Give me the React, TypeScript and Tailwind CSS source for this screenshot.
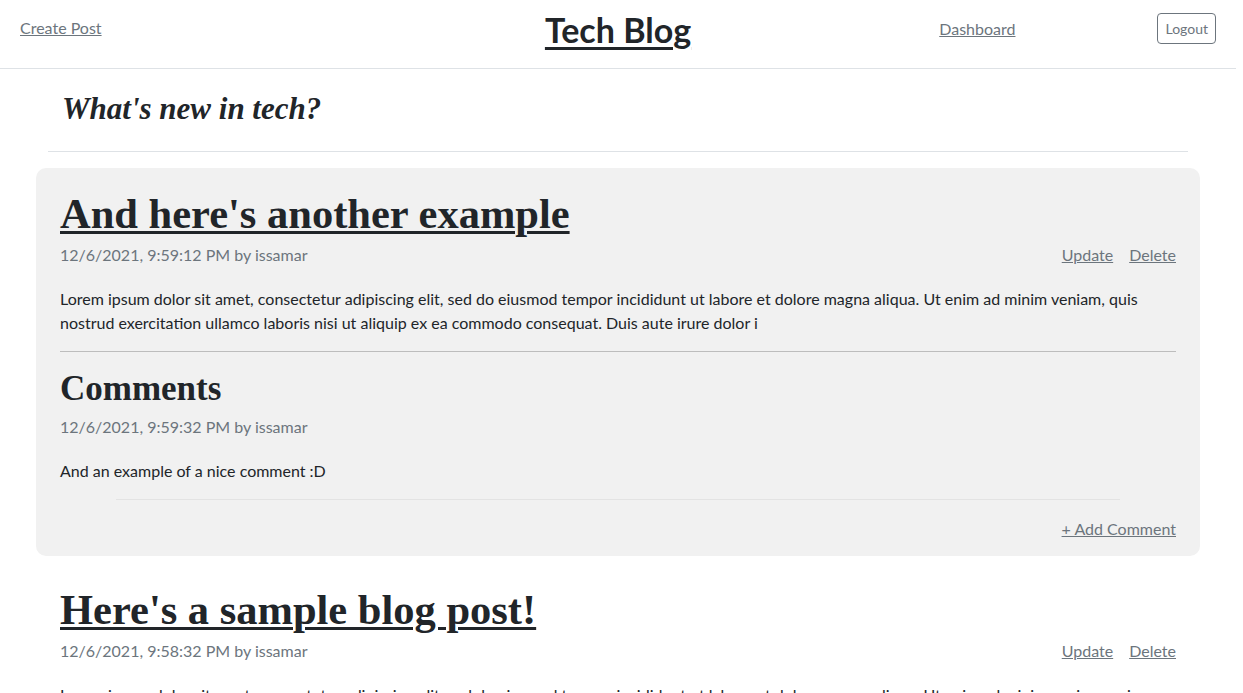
const LOREM =
  "Lorem ipsum dolor sit amet, consectetur adipiscing elit, sed do eiusmod tempor incididunt ut labore et dolore magna aliqua. Ut enim ad minim veniam, quis nostrud exercitation ullamco laboris nisi ut aliquip ex ea commodo consequat. Duis aute irure dolor i";

const serif = "font-['Liberation_Serif',serif]";

function PostMeta({ date }: { date: string }) {
  return (
    <div className="flex items-center justify-between leading-6">
      <span className="text-[#6c757d]">{date} by issamar</span>
      <div className="flex gap-4 text-[#6c757d]">
        <a href="#" className="underline">Update</a>
        <a href="#" className="underline">Delete</a>
      </div>
    </div>
  );
}

function PostTitle({ children }: { children: string }) {
  return (
    <h1 className={`${serif} mb-[5px] text-[42.5px] font-bold leading-[48px] text-[#212529]`}>
      <a href="#" className="underline decoration-[3px] underline-offset-[3px]">{children}</a>
    </h1>
  );
}

export default function App() {
  return (
    <div className="min-h-screen w-[1236px] bg-white font-['Lato','Noto_Sans',sans-serif] text-[16px] text-[#212529]">
      {/* Header */}
      <header className="grid h-[69px] grid-cols-[1fr_auto_1fr] items-start border-b border-[#dee2e6] px-5">
        <a href="#" className="mt-4 justify-self-start leading-6 text-[#6c757d] underline">Create Post</a>
        <a href="#" className="mt-[13px] text-[34px] font-bold leading-[34px] text-[#212529] underline decoration-[3px] underline-offset-[4px]">
          Tech Blog
        </a>
        <div className="mt-[13px] flex items-center justify-end gap-[142px]">
          <a href="#" className="leading-6 text-[#6c757d] underline">Dashboard</a>
          <button className="h-[31px] rounded border border-[#6c757d] px-[7px] text-[14px] text-[#6c757d]">
            Logout
          </button>
        </div>
      </header>

      <main className="px-9">
        <div className="mx-3 border-b border-[#dee2e6] pb-[25px] pt-[23px]">
          <h3 className={`${serif} pl-[14px] text-[31px] font-bold italic leading-[34px]`}>What's new in tech?</h3>
        </div>

        {/* Post with comments */}
        <section className="mt-4 rounded-[10px] bg-[#f1f1f1] px-6 pb-[15px] pt-[22px]">
          <PostTitle>And here's another example</PostTitle>
          <PostMeta date="12/6/2021, 9:59:12 PM" />
          <p className="mt-5 leading-6">{LOREM}</p>
          <hr className="my-4 border-t border-[#bdbdbd]" />
          <h2 className={`${serif} pt-[2px] text-[35px] font-bold leading-[38px]`}>Comments</h2>
          <div className="mt-[7px] leading-6 text-[#6c757d]">12/6/2021, 9:59:32 PM by issamar</div>
          <p className="mt-5 leading-6">And an example of a nice comment :D</p>
          <hr className="mx-14 mt-4 border-t border-[#e3e3e3]" />
          <div className="mt-[17px] flex justify-end leading-6">
            <a href="#" className="text-[#6c757d] underline">+ Add Comment</a>
          </div>
        </section>

        {/* Plain post */}
        <section className="px-6 pt-[30px]">
          <PostTitle>Here's a sample blog post!</PostTitle>
          <PostMeta date="12/6/2021, 9:58:32 PM" />
          <p className="mt-5 leading-6">{LOREM}</p>
        </section>
      </main>
    </div>
  );
}
